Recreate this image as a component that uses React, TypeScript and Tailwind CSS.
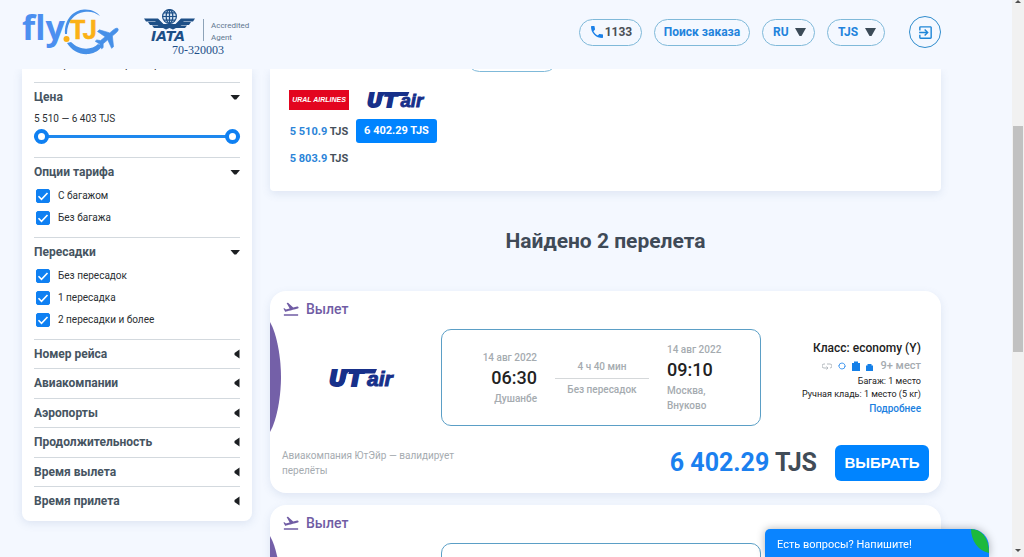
import {ReactNode, useState} from "react";
import {MdExitToApp, MdFlightTakeoff, MdPhone} from "react-icons/md";

const closedFilters = ["Номер рейса", "Авиакомпании", "Аэропорты", "Продолжительность", "Время вылета", "Время прилета"]

const Caret = ({open, className = ""}: {open: boolean, className?: string}) => (
    <svg viewBox="0 0 10 10" className={"w-[10px] h-[10px] shrink-0 " + className} fill="currentColor" aria-hidden="true">
        {open ? <path d="M0.500 3h9.500L6.200 7.500H4.300z"/> : <path d="M9.500 0.500v9L4.500 6V4z"/>}
    </svg>
)

const FlyLogo = () => (
    <svg viewBox="0 0 98 48" className="w-[98px] h-12 overflow-visible">
        <path d="M43 25C42 10 52 1 62 0.500C70 0 76 4 78 7C73 3 68 2 62 3C53 4 45 12 45 25Z" fill="#4690e8"/>
        <path d="M45 34C50 42 58 46 67 45C73 44 78 41 80 37L76 35C70 41 58 42 49 33Z" fill="#4690e8"/>
        <text x="0" y="31" fontFamily="Open Sans" fontWeight="700" fontSize="34" fill="#4c8ff0">fly</text>
        <circle cx="44.500" cy="30" r="3" fill="#fbb116"/>
        <text x="48" y="30" fontFamily="Roboto" fontWeight="700" fontSize="25" fill="#fbb116" stroke="#fbb116" strokeWidth="0.600">TJ</text>
        <path transform="translate(86 28) rotate(50)" fill="#4690e8" stroke="#4690e8" strokeWidth="0.600"
              d="M0-13C1.300-13 2-11 2-9V-4L11 2V4.500L2 2V8L5 10.500V12.500L0 11L-5 12.500V10.500L-2 8V2L-11 4.500V2L-2-4V-9C-2-11-1.300-13 0-13Z"/>
    </svg>
)

const IataLogo = () => (
    <svg viewBox="0 0 112 48" className="w-28 h-12">
        <g fill="none" stroke="#1d4f87" strokeWidth="1.200">
            <circle cx="25.500" cy="7.500" r="6.900" fill="#d5e3f1"/>
            <ellipse cx="25.500" cy="7.500" rx="3.300" ry="6.900"/>
            <path d="M25.500 0.500v14M18.500 7.500h14M20 3.800h11M20 11.200h11"/>
        </g>
        <g fill="#1d4f87">
            <path d="M0 9.500H14L19.500 15H31.500L37 9.500H51L49 12.500H40L39 13H47L45 16H37.500L36.500 16.500H43L41 19H32L29 20.500L25.500 19L22 20.500L19 19H10L8 16.500H14.500L13.500 16H6L4 13H12L11 12.500H2Z"/>
            <text x="7" y="32" fontFamily="DejaVu Sans" fontWeight="700" fontStyle="italic" fontSize="14">IATA</text>
            <text x="28" y="45" fontFamily="Liberation Serif" fontSize="12">70-320003</text>
        </g>
        <path d="M59.500 10v22" stroke="#8da3b8" strokeWidth="1"/>
        <g fill="#5f778f" fontFamily="Roboto" fontSize="8">
            <text x="67" y="19">Accredited</text>
            <text x="67" y="31">Agent</text>
        </g>
    </svg>
)

const UtairLogo = ({className}: {className: string}) => (
    <svg viewBox="0 0 68 18" className={className + " overflow-visible"} fill="#17308a" stroke="#17308a">
        <g fontFamily="DejaVu Sans" fontWeight="700" fontStyle="italic" fontSize="22" strokeWidth="2">
            <text x="0" y="17">U</text>
            <text x="19" y="17">T</text>
        </g>
        <path d="M16 0H48L46 4.500H14Z" stroke="none"/>
        <path d="M19.500 3L15.500 16" stroke="#fff" strokeWidth="0.800"/>
        <text x="38" y="17" fontFamily="Liberation Sans" fontWeight="700" fontStyle="italic" fontSize="21" strokeWidth="1">air</text>
    </svg>
)

const PriceFilter = () => {
    const [from, setFrom] = useState(5510)
    const [to, setTo] = useState(6403)
    const range = "absolute inset-0 w-full h-[15px] appearance-none bg-transparent pointer-events-none [&::-webkit-slider-thumb]:pointer-events-auto [&::-webkit-slider-thumb]:appearance-none [&::-webkit-slider-thumb]:w-[15px] [&::-webkit-slider-thumb]:h-[15px] [&::-webkit-slider-thumb]:rounded-full [&::-webkit-slider-thumb]:bg-white [&::-webkit-slider-thumb]:border-4 [&::-webkit-slider-thumb]:border-[#0f80f2]"

    return (
        <div>
            <p className="text-[10px] leading-4 mt-[6px]">5 510 — 6 403 TJS</p>
            <div className="relative h-[15px] mt-[2px] flex items-center">
                <div className="h-[3px] w-full rounded bg-[#1e88ee]"></div>
                <input type="range" aria-label="Цена от" min={5510} max={6403} value={from} onChange={e => setFrom(Math.min(+e.target.value, to))} className={range}/>
                <input type="range" aria-label="Цена до" min={5510} max={6403} value={to} onChange={e => setTo(Math.max(+e.target.value, from))} className={range}/>
            </div>
        </div>
    )
}

const FilterSection = ({title, children, className}: {title: string, children?: ReactNode, className: string}) => (
    <section className={"border-t border-[#d3d9de] " + className}>
        <h3>
            <button className="w-full flex items-center justify-between text-[12px] leading-4 font-bold text-[#465461]">
                {title}
                <Caret open={!!children} className="text-[#1c1f22]"/>
            </button>
        </h3>
        {children}
    </section>
)

const Check = ({label}: {label: string}) => (
    <label className="flex items-center gap-2 text-[10px] leading-[14px]">
        <span className="relative w-[14px] h-[14px]">
            <input type="checkbox" defaultChecked className="peer block appearance-none w-[14px] h-[14px] rounded-xs border border-[#0f80f2] checked:bg-[#0f80f2]"/>
            <svg viewBox="0 0 14 14" className="absolute inset-0 hidden peer-checked:block pointer-events-none" fill="none" stroke="#fff" strokeWidth="1.600">
                <path d="M2.500 7.300l3 3 6-6.300"/>
            </svg>
        </span>
        {label}
    </label>
)

const HeaderSelect = ({label, value, className}: {label: string, value: string, className: string}) => (
    <div className={"relative h-[27px] " + className}>
        <select aria-label={label} className="appearance-none w-full h-full rounded-full border border-[#7fb9d9] pl-[10px] text-[12px] font-bold text-[#2283dc]">
            <option>{value}</option>
        </select>
        <svg viewBox="0 0 11 8" className="absolute right-[9px] top-[9px] w-[11px] h-2 pointer-events-none" fill="#3c4b58"><path d="M0 0h11L6.500 8h-2z"/></svg>
    </div>
)

const FlightCard = () => (
    <article className="relative shrink-0 bg-white rounded-2xl shadow-[0_3px_8px_rgba(90,120,170,0.14)] px-3 pt-2 pb-3 overflow-hidden">
        <svg viewBox="0 0 11 110" className="absolute left-0 top-[31px] w-[11px] h-[110px]" fill="#7460a8"><path d="M0 0C7 12 11 36 11 55S7 98 0 110Z"/></svg>
        <h2 className="flex items-center gap-[6px] text-[14px] leading-5 font-medium text-[#705ca4]">
            <MdFlightTakeoff className="w-[18px] h-[18px]"/>
            Вылет
        </h2>
        <div className="mt-[10px] flex">
            <div className="flex-1 flex items-center justify-center pl-[2px]">
                <UtairLogo className="w-[68px] h-[18px]"/>
            </div>
            <div className="w-[320px] h-[97px] rounded-[10px] border border-[#5b9fc6] flex items-center text-[10px] leading-[15px] font-medium text-[#a5abb0]">
                <div className="w-[95px] text-right">
                    <p>14 авг 2022</p>
                    <p className="text-[18px] leading-[26px] text-[#222]">06:30</p>
                    <p>Душанбе</p>
                </div>
                <div className="w-[94px] mx-[18px] text-center">
                    <p className="pb-1 border-b border-[#d5d8da]">4 ч 40 мин</p>
                    <p className="pt-[3px]">Без пересадок</p>
                </div>
                <div>
                    <p>14 авг 2022</p>
                    <p className="text-[18px] leading-[26px] text-[#222]">09:10</p>
                    <p>Москва,<br/>Внуково</p>
                </div>
            </div>
            <div className="w-[168px] pr-2 pt-[11px] text-right text-[9px] leading-[13px] text-[#222]">
                <p className="text-[12px] leading-4 font-medium">Класс: economy (Y)</p>
                <p className="flex items-center justify-end gap-[6px] text-[11px] leading-[19px] font-medium text-[#a5abb0]">
                    <svg viewBox="0 0 10 8" className="w-[10px] h-2" fill="none" stroke="#b4babf"><path d="M3 2H2a1.500 1.500 0 0 0 0 4h3M4.500 4.500L6 6 4.500 7.500M5 2h3a1.800 1.800 0 0 1 0 4"/></svg>
                    <svg viewBox="0 0 8 8" className="w-2 h-2" fill="none" stroke="#4a9cf0"><circle cx="4" cy="4" r="3" strokeDasharray="8 1.400"/><path d="M6 4h2M0 4h2"/></svg>
                    <svg viewBox="0 0 8 10" className="w-2 h-[10px]" fill="#1580e8"><path d="M0 2h2V0.500h4V2h2v8H0z"/></svg>
                    <svg viewBox="0 0 7 10" className="w-[7px] h-[10px]" fill="#1580e8"><path d="M0 4.500h1.500V3h4v1.500H7V10H0z"/></svg>
                    <span className="pl-[2px]">9+ мест</span>
                </p>
                <p>Багаж: 1 место</p>
                <p>Ручная кладь: 1 место (5 кг)</p>
                <a href="#" className="text-[10px] leading-[15px] font-medium text-[#1b7fe0]">Подробнее</a>
            </div>
        </div>
        <div className="mt-[19px] flex items-center">
            <p className="w-[190px] text-[10px] leading-[15px] text-[#a5abb0]">Авиакомпания ЮтЭйр — валидирует перелёты</p>
            <p className="ml-auto text-[25px] leading-8 font-bold text-[#1b80ef]">6 402.29 <span className="text-[#414c57]">TJS</span></p>
            <button className="ml-[18px] w-[94px] h-9 rounded-md bg-[#0084ff] font-['Liberation_Sans',sans-serif] text-[15px] font-bold text-white">ВЫБРАТЬ</button>
        </div>
    </article>
)

const App = () => {
    const pill = "h-[27px] flex items-center justify-center rounded-full border border-[#7fb9d9] text-[12px] font-bold"

    return (
        <div className="h-screen overflow-hidden flex bg-[#f4f8ff] font-[Roboto,sans-serif] text-[#2b2f33]">
            <div className="flex-1 min-w-0 flex flex-col">
                <header className="h-[69px] shrink-0 pl-[22px] pr-[71px] flex items-start justify-between">
                    <div className="pt-[9px] flex gap-6">
                        <a href="#" aria-label="fly.TJ"><FlyLogo/></a>
                        <IataLogo/>
                    </div>
                    <div className="pt-4 flex items-center">
                        <a href="tel:1133" className={pill + " w-[63px] text-[#4a4f55]"}><MdPhone className="w-4 h-4 text-[#1b80e8]"/>1133</a>
                        <button className={pill + " ml-3 w-24 text-[#2283dc]"}>Поиск заказа</button>
                        <HeaderSelect label="Язык" value="RU" className="ml-3 w-[53px]"/>
                        <HeaderSelect label="Валюта" value="TJS" className="ml-3 w-[58px]"/>
                        <button aria-label="Войти" className="ml-6 w-8 h-8 flex items-center justify-center rounded-full border border-[#2f8ccd] text-[#1f86d8]"><MdExitToApp className="w-[17px] h-[17px]"/></button>
                    </div>
                </header>
                <div className="flex-1 min-h-0 overflow-hidden pl-[22px] pr-[71px] flex items-start gap-[18px]">
                    <aside className="w-[230px] shrink-0 bg-white rounded-b-lg shadow-[0_2px_10px_rgba(90,120,170,0.16)] px-3 pb-[5px]">
                        <div className="h-[13px] overflow-hidden flex items-start">
                            <a href="#" className="-mt-3 ml-4 text-[11px] leading-4 text-[#2b2f33]">Сбросить все фильтры</a>
                        </div>
                        <FilterSection title="Цена" className="h-[75px] pt-[6px]"><PriceFilter/></FilterSection>
                        <FilterSection title="Опции тарифа" className="h-20 pt-[6px]">
                            <div className="pl-[2px] pt-[9px] flex flex-col gap-2"><Check label="С багажом"/><Check label="Без багажа"/></div>
                        </FilterSection>
                        <FilterSection title="Пересадки" className="h-[102px] pt-[6px]">
                            <div className="pl-[2px] pt-[9px] flex flex-col gap-2"><Check label="Без пересадок"/><Check label="1 пересадка"/><Check label="2 пересадки и более"/></div>
                        </FilterSection>
                        {closedFilters.map(title => <FilterSection key={title} title={title} className="pt-[6px] pb-[6px] even:pb-[7px]"/>)}
                    </aside>
                    <main className="flex-1 min-w-0 flex flex-col">
                        <section className="h-[122px] relative bg-white rounded-b shadow-[0_3px_8px_rgba(90,120,170,0.14)] px-[19px] pt-[21px] flex gap-[7px] text-[11px] font-bold">
                            <div className="absolute left-[196px] -top-6 w-[92px] h-[27px] rounded-full border border-[#7fb9d9]"></div>
                            <div className="w-[60px] flex flex-col items-center">
                                <div className="w-full h-5 bg-[#e3051f] flex items-center justify-center text-white italic font-['Liberation_Sans',sans-serif] text-[7px] whitespace-nowrap">URAL AIRLINES</div>
                                <button className="h-6 mt-[10px] whitespace-nowrap text-[#2b84d8]">5 510.9 <span className="text-[#46505a]">TJS</span></button>
                                <button className="h-6 mt-[3px] whitespace-nowrap text-[#2b84d8]">5 803.9 <span className="text-[#46505a]">TJS</span></button>
                            </div>
                            <div className="w-[81px] flex flex-col items-center">
                                <UtairLogo className="w-[60px] h-5"/>
                                <button className="h-6 w-full mt-[9px] rounded-[3px] bg-[#0084ff] text-white">6 402.29 TJS</button>
                            </div>
                        </section>
                        <h1 className="mt-[36px] text-center text-[21px] leading-7 font-bold text-[#3f4a57]">Найдено 2 перелета</h1>
                        <div className="mt-[36px] flex flex-col gap-3">
                            <FlightCard/>
                            <FlightCard/>
                        </div>
                    </main>
                </div>
            </div>
            <div className="w-3 shrink-0 bg-[#f1f1f1] flex flex-col items-center" aria-hidden="true">
                <div className="h-[126px] shrink-0"><svg viewBox="0 0 6 4" className="w-[6px] h-1" fill="#505050"><path d="M0 3l3-3 3 3z"/></svg></div>
                <div className="h-[226px] w-[10px] bg-[#c1c1c1]"></div>
                <svg viewBox="0 0 6 4" className="w-[6px] h-1 mt-auto mb-1" fill="#505050"><path d="M0 0h6L3 3z"/></svg>
            </div>
            <button className="fixed bottom-0 right-[35px] w-[224px] h-7 overflow-hidden rounded-tl-[5px] rounded-tr-[18px] bg-[#0a84ff] pl-3 pt-[5px] text-left text-[11px] text-white shadow-[0_0_8px_rgba(0,0,0,0.3)]">
                Есть вопросы? Напишите!
                <svg viewBox="0 0 18 24" className="absolute right-0 top-0 w-[18px] h-6" fill="#1db93c"><path d="M0 0C10 0 18 8 18 24C7 22 0 11 0 0Z"/></svg>
            </button>
        </div>
    )
}

export default App
